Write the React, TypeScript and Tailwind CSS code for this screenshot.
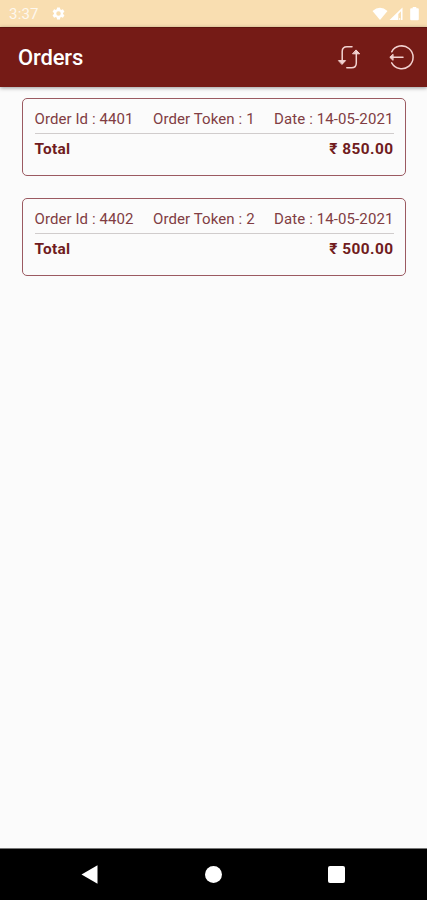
const orders = [
  { id: "4401", token: "1", date: "14-05-2021", total: "850.00" },
  { id: "4402", token: "2", date: "14-05-2021", total: "500.00" },
];

function StatusBar() {
  return (
    <div className="flex h-[27px] shrink-0 items-center justify-between bg-[#f9deb1] pl-[9px] pr-[8px] text-white">
      <div className="flex items-center gap-[12px]">
        <span className="pt-px text-[15px] leading-none tracking-[0.2px] opacity-80">3:37</span>
        <svg className="size-[15px]" viewBox="0 0 24 24" fill="currentColor" aria-hidden>
          <path d="M19.14 12.94c.04-.3.06-.61.06-.94s-.02-.64-.07-.94l2.03-1.58a.49.49 0 0 0 .12-.61l-1.92-3.32a.49.49 0 0 0-.59-.22l-2.39.96a7 7 0 0 0-1.62-.94l-.36-2.54a.48.48 0 0 0-.48-.41h-3.84a.48.48 0 0 0-.47.41l-.36 2.54c-.59.24-1.13.57-1.62.94l-2.39-.96a.48.48 0 0 0-.59.22L2.74 8.87a.48.48 0 0 0 .12.61l2.03 1.58c-.05.3-.09.63-.09.94s.02.64.07.94l-2.03 1.58a.49.49 0 0 0-.12.61l1.92 3.32c.12.22.37.29.59.22l2.39-.96c.5.38 1.03.7 1.62.94l.36 2.54c.05.24.24.41.48.41h3.84c.24 0 .44-.17.47-.41l.36-2.54a7 7 0 0 0 1.62-.94l2.39.96c.22.08.47 0 .59-.22l1.92-3.32a.48.48 0 0 0-.12-.61zM12 15.6a3.6 3.6 0 1 1 0-7.2 3.6 3.6 0 0 1 0 7.2z" />
        </svg>
      </div>
      <div className="flex items-center">
        <svg className="h-[14px] w-4" viewBox="0 0 16 14" fill="currentColor" aria-hidden>
          <path d="M.5 4Q8-2.4 15.5 4L8 13z" />
        </svg>
        <svg className="ml-px h-[14px] w-[14px]" viewBox="0 0 14 14" fill="currentColor" aria-hidden>
          <path d="M.5 13 13.5.5V13H12V4.2L9.3 7v6z" />
          <path d="M10.2 11h1v2h-1z" />
        </svg>
        <svg className="ml-[7px] h-[14px] w-[9px]" viewBox="0 0 9 14" fill="currentColor" aria-hidden>
          <path d="M2.7 0h3.6v1.2h1.5q1 0 1 1v10q0 1-1 1H1.2q-1 0-1-1v-10q0-1 1-1h1.5z" />
        </svg>
      </div>
    </div>
  );
}

function AppBar() {
  return (
    <header className="z-10 flex h-[60px] shrink-0 items-center justify-between border-t border-[#5f150f] bg-[#751b16] pl-[18px] pr-[13px] text-white shadow-[0_1px_4px_rgba(0,0,0,0.4)]">
      <h1 className="text-[22px] font-medium leading-none tracking-[-0.15px]">Orders</h1>
      <div className="flex items-center gap-7 text-[#f3d3d1]">
        <button type="button" aria-label="Refresh">
          <svg className="h-[26px] w-6" viewBox="0 0 24 26" fill="none" stroke="currentColor" strokeWidth={1.5} strokeLinecap="round" strokeLinejoin="round">
            <path d="M16 1.8h-5Q6.2 1.8 6.2 6.6V18" />
            <path d="M10.8 22.8h4.7q4.8 0 4.8-4.8V7" />
            <path d="M2.8 15.6h6.8l-3.4 3.6zM16.9 8.8h6.8l-3.4-3.6z" fill="currentColor" strokeWidth={1} />
          </svg>
        </button>
        <button type="button" aria-label="Log out">
          <svg className="h-[26px] w-[26px]" viewBox="0 0 26 26" fill="none" stroke="currentColor" strokeWidth={1.5} strokeLinecap="round" strokeLinejoin="round">
            <path d="M3.7 6.8a11.4 11.4 0 1 1 0 11M3 12.3h12" />
            <path d="M4.8 9.5 1.8 12.3l3 2.8z" fill="currentColor" strokeWidth={1} />
          </svg>
        </button>
      </div>
    </header>
  );
}

export default function App() {
  return (
    <div className="flex h-[900px] w-[427px] flex-col overflow-hidden bg-[#fbfbfb] font-[Roboto,sans-serif]">
      <StatusBar />
      <AppBar />
      <main className="flex flex-1 flex-col gap-[22px] pl-[22px] pr-[21px] pt-[11px]">
        {orders.map((order) => (
          <section key={order.id} className="h-[78px] rounded-[5px] border border-[#9b5a61] px-[11.5px] pt-[10px]">
            <div className="flex h-[25px] justify-between border-b border-[#d0cccc] text-[15px] leading-5 text-[#813d43]">
              <span className="tracking-[0.08px]">Order Id : {order.id}</span>
              <span className="tracking-[0.1px]">Order Token : {order.token}</span>
              <span className="tracking-[0.1px]">Date : {order.date}</span>
            </div>
            <div className="flex justify-between pt-[5px] text-[15.4px] font-bold leading-5 text-[#701b20]">
              <span className="tracking-[0.3px]">Total</span>
              <span className="tracking-[0.45px]">₹ {order.total}</span>
            </div>
          </section>
        ))}
      </main>
      <nav className="flex h-[52px] shrink-0 items-center justify-between border-t border-[#777] bg-black pl-[81px] pr-[82px] text-white">
        <svg className="h-[19px] w-[17px]" viewBox="0 0 17 19" fill="currentColor" aria-hidden>
          <path d="M.5 9.5 16.5.3v18.4z" />
        </svg>
        <span className="ml-px size-[17px] rounded-full bg-white" />
        <span className="size-[17px] rounded-[2px] bg-white" />
      </nav>
    </div>
  );
}
